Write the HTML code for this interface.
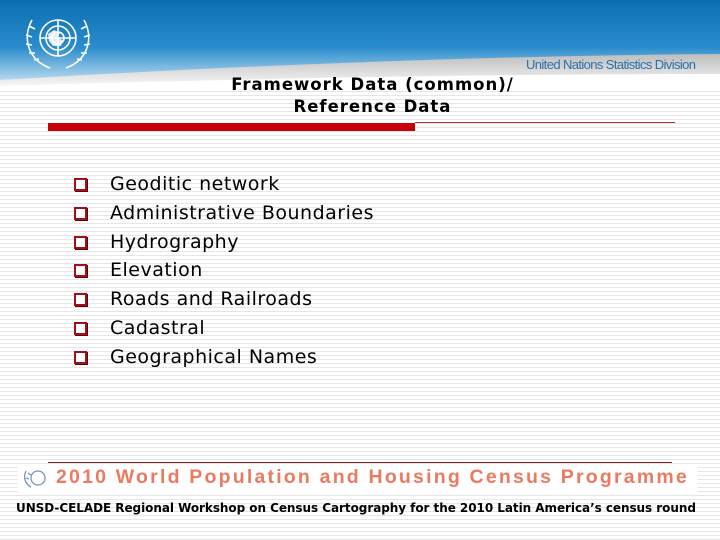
<!DOCTYPE html>
<html><head><style>
body{margin:0;width:720px;height:540px;overflow:hidden;position:relative;font-family:"DejaVu Sans","Liberation Sans",sans-serif;
background:#fff repeating-linear-gradient(to bottom,#fff 0,#fff 3px,#e6e6e6 3px,#e6e6e6 4px);}
.t{position:absolute;left:0;width:745px;text-align:center;font-weight:bold;font-size:16.5px;letter-spacing:1px;color:#000;}
ul{position:absolute;left:72px;top:171px;margin:0;padding:0;list-style:none;}
li{height:28.8px;font-size:19px;letter-spacing:0.5px;color:#000;position:relative;padding-left:38px;line-height:26px;}
li:before{content:"";position:absolute;left:2px;top:7px;width:9px;height:9px;border:2px solid #a0101c;background:#fff;box-shadow:1px 1px 0 #600;}
</style></head><body>
<svg style="position:absolute;left:0;top:0" width="720" height="90">
<defs>
<linearGradient id="g" x1="0" y1="0" x2="0" y2="1"><stop offset="0" stop-color="#0a6fb0"/><stop offset=".55" stop-color="#2a8ccc"/><stop offset="1" stop-color="#cfe6f5"/></linearGradient>
<linearGradient id="w" x1="0" y1="0" x2="0" y2="1"><stop offset="0" stop-color="#bdbdbd"/><stop offset="1" stop-color="#ffffff"/></linearGradient>
</defs>
<rect width="720" height="86" fill="url(#g)"/>
<path d="M0 80 C200 68 450 56 720 54 L720 90 L0 90Z" fill="url(#w)"/>
<path d="M0 86 C200 80 450 74 720 74 L720 90 L0 90Z" fill="#fff"/>
<g stroke="#fff" fill="none" stroke-width="1.6">
<circle cx="58" cy="38" r="18"/><circle cx="58" cy="38" r="12"/><circle cx="58" cy="38" r="6"/>
<line x1="58" y1="20" x2="58" y2="56"/><line x1="40" y1="38" x2="76" y2="38"/>
<path d="M32 20 C22 38 28 60 50 68 M84 20 C94 38 88 60 66 68"/>
<path d="M29 26 l6 3 M26 35 l6 2 M26 44 l6 1 M29 53 l6 0 M34 60 l5 -1 M87 26 l-6 3 M90 35 l-6 2 M90 44 l-6 1 M87 53 l-6 0 M82 60 l-5 -1"/>
</g>
<path d="M48 34 l6 -4 l6 3 l-3 5 l6 2 l-2 6 l-8 0 l-4 -5z" fill="#fff" opacity=".85"/>
<text x="696" y="69" text-anchor="end" font-family="Liberation Sans" font-size="13" fill="#2a6fa8" textLength="170">United Nations Statistics Division</text>
</svg>
<div class="t" style="top:75px">Framework Data (common)/</div>
<div class="t" style="top:97px">Reference Data</div>
<div style="position:absolute;left:48px;top:123px;width:367px;height:8px;background:#c8000a"></div>
<div style="position:absolute;left:415px;top:122px;width:260px;height:1px;background:#b03030"></div>
<ul>
<li>Geoditic network</li><li>Administrative Boundaries</li><li>Hydrography</li><li>Elevation</li><li>Roads and Railroads</li><li>Cadastral</li><li>Geographical Names</li>
</ul>
<div style="position:absolute;left:48px;top:462px;width:624px;height:1px;background:#802020"></div>
<div style="position:absolute;left:18px;top:465px;width:680px;height:28px;background:#fff"></div>
<svg style="position:absolute;left:22px;top:467px" width="30" height="22"><g stroke="#7c93bd" fill="none" stroke-width="1.3"><circle cx="16" cy="11" r="7"/><path d="M4 4 C1 10 3 17 9 20 M6 6 l3 2 M4 11 l3 1"/></g></svg>
<div style="position:absolute;left:56px;top:466px;font-family:'Liberation Sans',sans-serif;font-size:19.5px;font-weight:bold;color:#ec7a60;letter-spacing:2.2px;white-space:nowrap">2010 World Population and Housing Census Programme</div>
<div style="position:absolute;left:16px;top:501px;font-size:12px;font-weight:bold;color:#000;white-space:nowrap;letter-spacing:-0.05px">UNSD-CELADE Regional Workshop on Census Cartography for the 2010 Latin America’s census round</div>
</body></html>
